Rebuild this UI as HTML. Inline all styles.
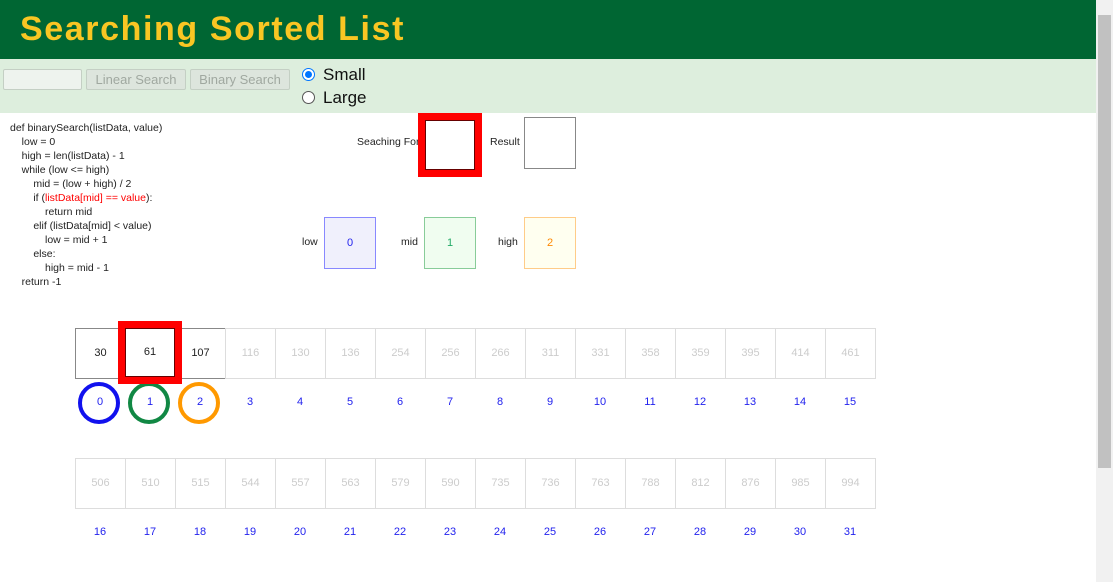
<!DOCTYPE html>
<html><head><style>
body{margin:0;width:1113px;height:582px;overflow:hidden;font-family:"Liberation Sans","DejaVu Sans",sans-serif;position:relative;background:#fff}
.a{position:absolute}
.hdr{left:0;top:0;width:1096px;height:59px;background:#006633}
.hdr h1{margin:0;position:absolute;left:20px;top:10px;font-size:34px;color:#f9c623;font-weight:bold;letter-spacing:1.6px}
.bar{left:0;top:59px;width:1096px;height:54px;background:#ddeedd}
.btn{position:absolute;top:69px;height:19px;border:1px solid #c4cfc4;background:#dde5dd;color:#a0a8a0;font-size:13px;line-height:19px;text-align:center;border-radius:2px}
.code{left:10px;top:121px;font-size:10.5px;line-height:14px;color:#222;white-space:pre}
.lbl{font-size:10.5px;color:#222}
.box{width:50px;height:50px;border:1px solid #888;text-align:center;line-height:50px;font-size:11px;box-sizing:content-box}
.cell{position:absolute;width:49px;height:49px;border:1px solid #ddd;text-align:center;line-height:49px;font-size:11px;color:#ccc}
.idx{position:absolute;width:50px;text-align:center;font-size:11px;color:#22e}
.circ{position:absolute;width:34px;height:34px;border-radius:50%;border:4px solid}
.sb{left:1096px;top:0;width:17px;height:582px;background:#f1f1f1}
.th{left:1098px;top:15px;width:13px;height:453px;background:#c1c1c1}
</style></head><body>
<div class="a hdr"><h1>Searching Sorted List</h1></div>
<div class="a bar"></div>
<div class="a" style="left:3px;top:69px;width:77px;height:19px;border:1px solid #c4cfc4;background:#eef3ee;border-radius:2px"></div>
<div class="btn" style="left:86px;width:98px">Linear Search</div>
<div class="btn" style="left:190px;width:98px">Binary Search</div>
<div class="a" style="left:302px;top:68px;width:11px;height:11px;border-radius:50%;border:1px solid #0075ff;background:#fff"><div style="margin:2px;width:7px;height:7px;border-radius:50%;background:#0075ff"></div></div>
<div class="a" style="left:302px;top:91px;width:11px;height:11px;border-radius:50%;border:1px solid #555;background:#fff"></div>
<div class="a" style="left:323px;top:65px;font-size:17px;color:#111">Small</div>
<div class="a" style="left:323px;top:88px;font-size:17px;color:#111">Large</div>
<div class="a code">def binarySearch(listData, value)
    low = 0
    high = len(listData) - 1
    while (low &lt;= high)
        mid = (low + high) / 2
        if (<span style="color:#f00">listData[mid] == value</span>):
            return mid
        elif (listData[mid] &lt; value)
            low = mid + 1
        else:
            high = mid - 1
    return -1</div>
<div class="a lbl" style="left:357px;top:136px">Seaching For</div>
<div class="a" style="left:418px;top:113px;width:50px;height:50px;border:7px solid #f00;background:#fff;box-shadow:inset 0 0 0 1px #600"></div>
<div class="a lbl" style="left:490px;top:136px">Result</div>
<div class="a box" style="left:524px;top:117px"></div>
<div class="a lbl" style="left:302px;top:236px">low</div>
<div class="a box" style="left:324px;top:217px;border-color:#88f;background:#f0f0fc;color:#22e">0</div>
<div class="a lbl" style="left:401px;top:236px">mid</div>
<div class="a box" style="left:424px;top:217px;border-color:#8c9;background:#f0fdf0;color:#2a6">1</div>
<div class="a lbl" style="left:498px;top:236px">high</div>
<div class="a box" style="left:524px;top:217px;border-color:#fc8;background:#fffff0;color:#f80">2</div>
<div id="g"></div>
<div class="circ" style="left:78px;top:382px;border-color:#11e"></div>
<div class="circ" style="left:128px;top:382px;border-color:#184"></div>
<div class="circ" style="left:178px;top:382px;border-color:#f90"></div>
<div class="a" style="left:118px;top:321px;width:50px;height:49px;border:7px solid #f00;background:#fff;text-align:center;line-height:49px;font-size:11px;color:#222;box-shadow:inset 0 0 0 1px #600">61</div>
<div class="a sb"></div><div class="a th"></div>
<script>
var v=[30,61,107,116,130,136,254,256,266,311,331,358,359,395,414,461,506,510,515,544,557,563,579,590,735,736,763,788,812,876,985,994];
var h='';
for(var i=0;i<32;i++){var r=i<16?0:1,c=i%16,x=75+c*50,y=r?458:328;
var st=i<3?'border-color:#888;color:#222;':'';
h+='<div class="cell" style="left:'+x+'px;top:'+y+'px;'+st+'">'+v[i]+'</div>';
h+='<div class="idx" style="left:'+x+'px;top:'+(r?526:396)+'px">'+i+'</div>';}
document.getElementById('g').innerHTML=h;
</script>
</body></html>
